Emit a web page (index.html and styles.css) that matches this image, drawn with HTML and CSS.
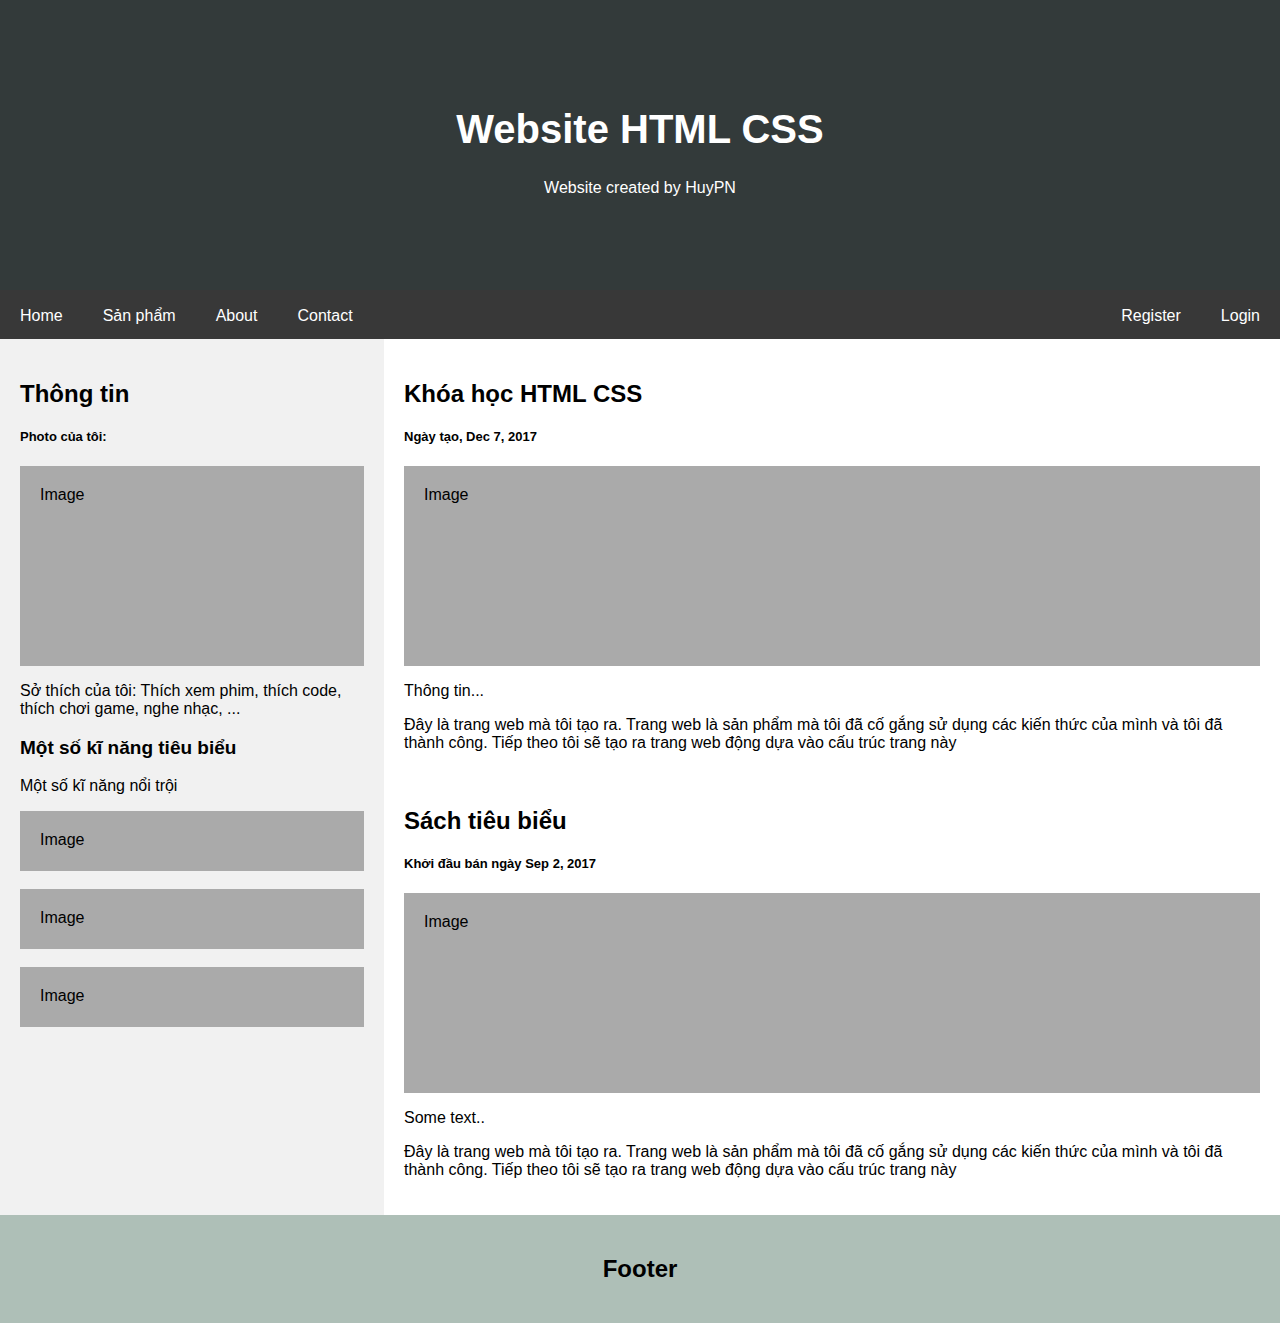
FILE: index.html
```html
<!DOCTYPE html>
<html lang="vi">
<head>
<meta charset="utf-8">
<title>Website HTML CSS</title>
<link rel="stylesheet" href="styles.css">
</head>
<body>
<header class="header">
  <h1>Website HTML CSS</h1>
  <p>Website created by HuyPN</p>
</header>
<nav class="topnav">
  <a href="#">Home</a>
  <a href="#">Sản phẩm</a>
  <a href="#">About</a>
  <a href="#">Contact</a>
  <span class="spacer"></span>
  <a href="#">Register</a>
  <a href="#">Login</a>
</nav>
<div class="row">
  <aside class="leftcolumn">
    <h2>Thông tin</h2>
    <h5>Photo của tôi:</h5>
    <div class="fakeimg tall">Image</div>
    <p>Sở thích của tôi: Thích xem phim, thích code, thích chơi game, nghe nhạc, ...</p>
    <h3>Một số kĩ năng tiêu biểu</h3>
    <p>Một số kĩ năng nổi trội</p>
    <div class="fakeimg short">Image</div>
    <div class="fakeimg short">Image</div>
    <div class="fakeimg short">Image</div>
  </aside>
  <main class="rightcolumn">
    <section class="card">
      <h2>Khóa học HTML CSS</h2>
      <h5>Ngày tạo, Dec 7, 2017</h5>
      <div class="fakeimg tall">Image</div>
      <p>Thông tin...</p>
      <p>Đây là trang web mà tôi tạo ra. Trang web là sản phẩm mà tôi đã cố gắng sử dụng các kiến thức của mình và tôi đã thành công. Tiếp theo tôi sẽ tạo ra trang web động dựa vào cấu trúc trang này</p>
    </section>
    <section class="card">
      <h2>Sách tiêu biểu</h2>
      <h5>Khởi đầu bán ngày Sep 2, 2017</h5>
      <div class="fakeimg tall">Image</div>
      <p>Some text..</p>
      <p>Đây là trang web mà tôi tạo ra. Trang web là sản phẩm mà tôi đã cố gắng sử dụng các kiến thức của mình và tôi đã thành công. Tiếp theo tôi sẽ tạo ra trang web động dựa vào cấu trúc trang này</p>
    </section>
  </main>
</div>
<footer class="footer">
  <h2>Footer</h2>
</footer>
</body>
</html>
```
FILE: styles.css
```css
* { box-sizing: border-box; }

body {
  margin: 0;
  font-family: "Liberation Sans", Arial, sans-serif;
  color: #000;
  font-size: 16px;
}

.header {
  background: #333a3a;
  color: #fff;
  text-align: center;
  padding: 80px 20px 77px;
}
.header h1 {
  font-size: 40px;
  margin: 26px 0 27px;
  line-height: 46px;
}
.header p {
  margin: 0 0 16px;
  line-height: 18px;
}

.topnav {
  display: flex;
  background: #383838;
}
.topnav a {
  color: #fff;
  text-decoration: none;
  padding: 15px 20px 13px;
  line-height: 21px;
  font-size: 16px;
}
.topnav .spacer { flex: 1; }

.row {
  display: flex;
}
.leftcolumn {
  width: 384px;
  flex: none;
  background: #f1f1f1;
  padding: 21px 20px 20px;
}
.rightcolumn {
  flex: 1;
  background: #fff;
  padding: 21px 20px 20px;
}

h2 {
  font-size: 24px;
  margin: 20px 0;
  line-height: 27px;
}
h3 {
  font-size: 19px;
  margin: 19px 0;
  line-height: 21px;
}
h5 {
  font-size: 13px;
  margin: 22px 0;
  line-height: 15px;
}
p {
  margin: 16px 0;
  line-height: 18px;
}

.fakeimg {
  background: #aaa;
  padding: 20px;
  line-height: 18px;
}
.fakeimg.tall { height: 200px; }
.fakeimg.short { height: 60px; margin-bottom: 18px; }

.card + .card { margin-top: 55px; }

.footer {
  background: #aebfb7;
  text-align: center;
  padding: 20px 20px 21px;
}
.footer h2 { margin: 20px 0; }
```
